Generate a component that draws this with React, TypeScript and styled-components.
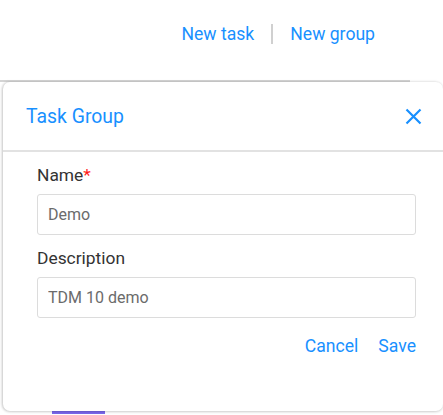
import styled, { createGlobalStyle } from "styled-components"

const GlobalStyle = createGlobalStyle`
    body {
        margin: 0;
        background: #fff;
        font-family: Roboto, "Liberation Sans", sans-serif;
    }
`

const Page = styled.div`
    width: 443px;
    height: 415px;
    overflow: hidden;
    display: flex;
    flex-direction: column;
`

const Toolbar = styled.div`
    display: flex;
    justify-content: flex-end;
    align-items: center;
    height: 68px;
    padding-right: 68px;
    gap: 17px;
`

const LinkButton = styled.button`
    border: none;
    background: none;
    padding: 0;
    font-family: inherit;
    font-size: 17.6px;
    color: #1890ff;
    cursor: pointer;
`

const Divider = styled.span`
    display: block;
    width: 2px;
    height: 20px;
    background: #d0d0d0;
`

const Content = styled.div`
    position: relative;
    flex: 1;
    margin-top: 12px;
`

const TableEdge = styled.div`
    width: 410px;
    height: 2px;
    background: #d4d4d4;
`

const Tag = styled.div`
    width: 53px;
    height: 4px;
    margin: 328px 0 0 52px;
    background: #7b68ee;
`

const Modal = styled.div`
    position: absolute;
    top: 2px;
    left: 3px;
    width: 440px;
    height: 329px;
    background: #fff;
    border-radius: 7px;
    box-shadow: -1px 0 3px rgba(0, 0, 0, 0.18), 0 1px 3px rgba(0, 0, 0, 0.12);
    display: flex;
    flex-direction: column;
`

const ModalHeader = styled.div`
    display: flex;
    justify-content: space-between;
    align-items: center;
    height: 68px;
    padding: 0 21px 0 23px;
    border-bottom: 2px solid #e2e2e2;
`

const ModalTitle = styled.h2`
    margin: 0;
    font-weight: 400;
    font-size: 19.4px;
    color: #1890ff;
`

const CloseButton = styled.button`
    border: none;
    background: none;
    padding: 0;
    display: flex;
    color: #1890ff;
    cursor: pointer;
`

const ModalBody = styled.div`
    display: flex;
    flex-direction: column;
    padding: 13px 27px 0 34px;
`

const Label = styled.label`
    font-size: 17.4px;
    color: #333;
    line-height: 20px;
    margin-bottom: 9px;
`

const Required = styled.span`
    color: #ff1a1a;
`

const Input = styled.input`
    box-sizing: border-box;
    width: 100%;
    height: 41px;
    padding: 0 10px;
    border: 1px solid #dcdcdc;
    border-radius: 3px;
    font-family: inherit;
    font-size: 16px;
    color: #6b6b6b;
    margin-bottom: 13px;
    outline: none;
`

const Actions = styled.div`
    display: flex;
    justify-content: flex-end;
    gap: 20px;
    margin-top: 5px;
`

export default function App() {
    return (
        <Page>
            <GlobalStyle />
            <Toolbar>
                <LinkButton>New task</LinkButton>
                <Divider />
                <LinkButton>New group</LinkButton>
            </Toolbar>
            <Content>
                <TableEdge />
                <Tag />
                <Modal>
                    <ModalHeader>
                        <ModalTitle>Task Group</ModalTitle>
                        <CloseButton aria-label="Close">
                            <svg width="17" height="17" viewBox="0 0 17 17" fill="none" stroke="currentColor" strokeWidth="2.2">
                                <path d="M1.5 1.5L15.5 15.5M15.5 1.5L1.5 15.5" />
                            </svg>
                        </CloseButton>
                    </ModalHeader>
                    <ModalBody>
                        <Label>Name<Required>*</Required></Label>
                        <Input defaultValue="Demo" />
                        <Label>Description</Label>
                        <Input defaultValue="TDM 10 demo" />
                        <Actions>
                            <LinkButton>Cancel</LinkButton>
                            <LinkButton>Save</LinkButton>
                        </Actions>
                    </ModalBody>
                </Modal>
            </Content>
        </Page>
    )
}
